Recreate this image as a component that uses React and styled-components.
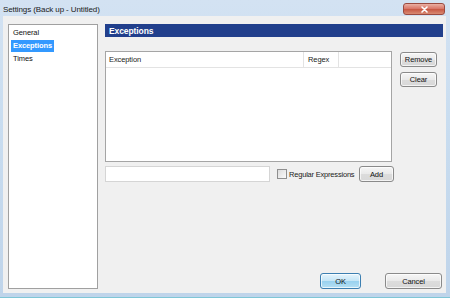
import React from "react";
import styled, { createGlobalStyle } from "styled-components";

const Global = createGlobalStyle`
  html, body { margin: 0; padding: 0; background: #c6daee; }
  * { box-sizing: border-box; }
  body { font-family: "Liberation Sans", Arial, sans-serif; font-size: 7.5px; letter-spacing: -0.1px; color: #000; }
`;

const Window = styled.div`
  width: 450px;
  height: 298px;
  display: flex;
  flex-direction: column;
  background: linear-gradient(180deg, #d3e2f2 0%, #c9ddf0 40%, #bfd4ea 100%);
  border-bottom: 1px solid #7fc6d6;
`;

const TitleBar = styled.div`
  height: 16px;
  display: flex;
  align-items: center;
  padding: 0 5px 0 3px;
`;

const Title = styled.span`
  font-size: 8px;
  color: #1a1a1a;
  padding-top: 2px;
`;

const CloseButton = styled.div`
  margin-left: auto;
  width: 42px;
  height: 12px;
  margin-top: 2px;
  border: 1px solid #9a4a40;
  border-radius: 3px;
  background: linear-gradient(180deg, #eab0a4 0%, #d9786a 45%, #c85a46 55%, #d98a72 100%);
  display: flex;
  align-items: center;
  justify-content: center;
`;

const Body = styled.div`
  flex: 1;
  margin: 0 4px 4px 3px;
  background: #f0f0f0;
  display: flex;
  padding: 8px 3px 4px 5px;
  gap: 7px;
`;

const Sidebar = styled.div`
  width: 90px;
  background: #fff;
  border: 1px solid #a0a0a0;
  padding: 2px 2px;
  display: flex;
  flex-direction: column;
`;

const NavItem = styled.div`
  height: 12px;
  line-height: 12px;
  padding: 0 2px;
  margin-bottom: 1px;
  align-self: flex-start;
  color: ${(p) => (p.$active ? "#fff" : "#111")};
  background: ${(p) => (p.$active ? "#3399ff" : "transparent")};
  font-weight: ${(p) => (p.$active ? 700 : 400)};
`;

const Main = styled.div`
  flex: 1;
  display: flex;
  flex-direction: column;
`;

const HeaderBar = styled.div`
  height: 13px;
  background: #213f8c;
  color: #fff;
  font-weight: 700;
  font-size: 8.5px;
  display: flex;
  align-items: center;
  padding-left: 4px;
`;

const ListRow = styled.div`
  display: flex;
  margin-top: 14px;
  gap: 8px;
`;

const ListView = styled.div`
  width: 287px;
  height: 111px;
  background: #fff;
  border: 1px solid #a5a5a5;
  display: flex;
  flex-direction: column;
`;

const ListHeader = styled.div`
  height: 16px;
  display: flex;
  border-bottom: 1px solid #e3e3e3;
`;

const Column = styled.div`
  width: ${(p) => p.$w}px;
  border-right: 1px solid #e3e3e3;
  padding-left: ${(p) => p.$pad}px;
  display: flex;
  align-items: center;
  color: #222;
`;

const SideButtons = styled.div`
  display: flex;
  flex-direction: column;
  gap: 5px;
  padding-top: 1px;
`;

const Button = styled.button`
  width: ${(p) => p.$w}px;
  height: ${(p) => p.$h || 15}px;
  padding: 0;
  font-family: "Liberation Sans", Arial, sans-serif;
  font-size: 7.5px;
  letter-spacing: -0.1px;
  color: #111;
  border-radius: 3px;
  border: 1px solid ${(p) => (p.$default ? "#3c7fb1" : "#8a8a8a")};
  background: ${(p) =>
    p.$default
      ? "linear-gradient(180deg, #e5f4fc 0%, #c4e5f6 50%, #98d1ef 51%, #b6e0f4 100%)"
      : "linear-gradient(180deg, #f6f6f6 0%, #e9e9e9 50%, #dcdcdc 51%, #d8d8d8 100%)"};
  box-shadow: inset 0 0 0 1px rgba(255, 255, 255, 0.7);
`;

const InputRow = styled.div`
  display: flex;
  align-items: center;
  margin-top: 4px;
  height: 16px;
`;

const TextInput = styled.div`
  width: 165px;
  height: 16px;
  background: #fff;
  border: 1px solid #d5d5d5;
`;

const Check = styled.div`
  width: 10px;
  height: 10px;
  margin-left: 7px;
  border: 1px solid #8f8f8f;
  background: linear-gradient(135deg, #dcdcdc, #fafafa);
`;

const CheckLabel = styled.span`
  margin-left: 2px;
  color: #222;
  width: 70px;
  white-space: nowrap;
  letter-spacing: -0.2px;
`;

const Footer = styled.div`
  margin-top: auto;
  display: flex;
  justify-content: flex-end;
  gap: 24px;
  padding-right: 1px;
`;

export default function App() {
  return (
    <>
      <Global />
      <Window>
        <TitleBar>
          <Title>Settings (Back up - Untitled)</Title>
          <CloseButton>
            <svg width="9" height="7" viewBox="0 0 9 7">
              <path d="M2 1 L7 6 M7 1 L2 6" stroke="#fff" strokeWidth="1.6" strokeLinecap="round" />
            </svg>
          </CloseButton>
        </TitleBar>
        <Body>
          <Sidebar>
            <NavItem>General</NavItem>
            <NavItem $active>Exceptions</NavItem>
            <NavItem>Times</NavItem>
          </Sidebar>
          <Main>
            <HeaderBar>Exceptions</HeaderBar>
            <ListRow>
              <ListView>
                <ListHeader>
                  <Column $w={198} $pad={3}>Exception</Column>
                  <Column $w={35} $pad={4}>Regex</Column>
                </ListHeader>
              </ListView>
              <SideButtons>
                <Button $w={37}>Remove</Button>
                <Button $w={37}>Clear</Button>
              </SideButtons>
            </ListRow>
            <InputRow>
              <TextInput />
              <Check />
              <CheckLabel>Regular Expressions</CheckLabel>
              <Button $w={35} $h={16}>Add</Button>
            </InputRow>
            <Footer>
              <Button $w={41} $h={16} $default>OK</Button>
              <Button $w={57} $h={16}>Cancel</Button>
            </Footer>
          </Main>
        </Body>
      </Window>
    </>
  );
}
